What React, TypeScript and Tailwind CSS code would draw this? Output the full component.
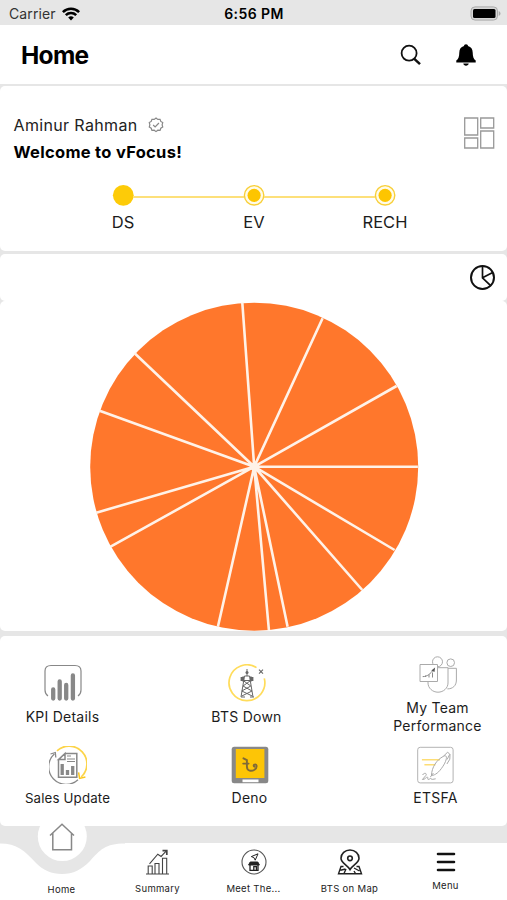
import type { ReactNode } from "react";

const spokes: [number, number][] = [
  [152.7, 2.7], [233, 18.3], [307, 86], [328.3, 166.7], [305, 250], [272.7, 290], [198, 326.7],
  [179.3, 330], [128.3, 326.7], [21, 246.7], [6.7, 212.7], [10, 110.7], [45, 53.3],
];

function Tile({ label, className, children }: { label: ReactNode; className: string; children: ReactNode }) {
  return (
    <div className={`flex shrink-0 flex-col items-center text-[14px] tracking-[0.25px] ${className}`}>
      {children}
      <div className="text-center leading-[17.5px] text-[#1c1c1c]">{label}</div>
    </div>
  );
}

function NavItem({ label, children, className }: { label: string; children: ReactNode; className: string }) {
  return (
    <div className={`flex w-24 flex-col items-center ${className}`}>
      {children}
      <span className="text-[9.5px] leading-3 tracking-[0.3px] whitespace-nowrap text-[#222]">{label}</span>
    </div>
  );
}

function Node({ label, solid }: { label: string; solid?: boolean }) {
  return (
    <div className="flex w-[60px] shrink-0 flex-col items-center">
      <svg width="22" height="22" viewBox="0 0 22 22">
        {solid ? (
          <circle cx="11.3" cy="11.3" r="10.4" fill="#fdcb08" />
        ) : (
          <>
            <circle cx="11.1" cy="11.3" r="9.7" fill="#fffbe8" stroke="#f8cf38" strokeWidth="1.4" />
            <circle cx="11.1" cy="11.3" r="6.6" fill="#fdc500" />
          </>
        )}
      </svg>
      <span className="mt-[6px] text-[16.5px] leading-5 text-[#1c1c1c]">{label}</span>
    </div>
  );
}

export default function App() {
  return (
    <div className="flex h-[900px] w-[507px] flex-col overflow-hidden bg-[#e6e6e6] font-[Inter,sans-serif] text-black">
      <div className="grid h-[25px] shrink-0 grid-cols-3 items-center pt-[2px] pr-[6px] pl-[9px]">
        <div className="flex items-center gap-[6px] text-[14px] leading-5 tracking-[0.1px] text-[#333]">
          <span>Carrier</span>
          <svg width="18" height="14" viewBox="0 0 18 14" fill="none" stroke="#000" strokeWidth="2.6">
            <path d="M.9 5.1A11.6 11.6 0 0 1 17.1 5.1M3.8 8.1A7.5 7.5 0 0 1 14.2 8.1" />
            <path d="M9 13.4 6.2 10.5A4 4 0 0 1 11.8 10.5Z" fill="#000" stroke="none" />
          </svg>
        </div>
        <div className="pr-[2px] text-center text-[14px] leading-5 font-semibold tracking-[0.4px] whitespace-nowrap">6:56 PM</div>
        <svg className="-mt-[2px] justify-self-end" width="31" height="16" viewBox="0 0 31 16">
          <rect x="1" y="1.9" width="26.5" height="13.2" rx="4" fill="#d6d6d6" stroke="#aaa" />
          <rect x="3" y="3.9" width="22.5" height="9.2" rx="1.5" />
          <path d="M28.7 6.1Q30.5 6.7 30.5 8.5T28.7 10.9Z" fill="#aaa" />
        </svg>
      </div>

      <header className="flex h-[59px] shrink-0 items-center bg-white pr-[30px] pl-[21px]">
        <h1 className="flex-1 text-[24.5px] leading-8 font-bold tracking-[-0.7px]">Home</h1>
        <svg width="22" height="22" viewBox="0 0 22 22" fill="none" stroke="#111" strokeWidth="1.8">
          <circle cx="9.1" cy="9.2" r="7.5" />
          <path d="m14.3 14.8 5.7 5.4" strokeWidth="2.5" />
        </svg>
        <svg className="ml-[33px]" width="22" height="24" viewBox="0 0 22 24">
          <path d="M11 1.2c1.3 0 1.9.8 2 1.8 3.2.8 4.6 3.3 4.7 6.5.1 4.3.8 6.5 3 8.1v1.8H1.3v-1.8c2.2-1.6 2.9-3.8 3-8.1.1-3.2 1.5-5.7 4.7-6.5.1-1 .7-1.8 2-1.8ZM8.3 20.5h5.4c-.2 1.4-1.2 2.2-2.7 2.2s-2.5-.8-2.7-2.2Z" />
        </svg>
      </header>

      <section className="mt-[1.5px] flex h-[165px] shrink-0 flex-col rounded-[5px] bg-white">
        <div className="flex h-[97px] shrink-0 items-start justify-between pt-[29.5px] pr-[12px] pl-[13.5px]">
          <div>
            <div className="flex items-center text-[16px] leading-5 tracking-[0.35px] text-[#222]">
              Aminur Rahman
              <svg className="ml-[10px]" width="16" height="16" viewBox="0 0 24 24" fill="none" stroke="#888" strokeWidth="1.8">
                <path d="m12 1.5 2.7 2.1 3.4-.2 1.1 3.2 2.9 1.8-.9 3.3.9 3.3-2.9 1.8-1.1 3.2-3.4-.2-2.7 2.1-2.7-2.1-3.4.2-1.1-3.2-2.9-1.8.9-3.3-.9-3.3 2.9-1.8 1.1-3.2 3.4.2Z" />
                <path d="m7.7 12 3 3 5.7-6" />
              </svg>
            </div>
            <div className="mt-[7px] text-[16.5px] leading-5 font-bold tracking-[0.3px]">Welcome to vFocus!</div>
          </div>
          <svg className="mt-[2px]" width="32" height="32" viewBox="0 0 32 32" fill="none" stroke="#999" strokeWidth="1.3">
            <path d="M1.7 1h13v17h-13zM17.7 1h13v10h-13zM1.7 21h13v10h-13zM17.7 14h13v17h-13z" />
          </svg>
        </div>
        <div className="flex pt-[1px] pl-[93px]">
          <Node label="DS" solid />
          <div className="-mx-[20px] mt-[12px] h-[2px] w-[111px] bg-[#fde07a]" />
          <Node label="EV" />
          <div className="-mx-[20px] mt-[12px] h-[2px] w-[111px] bg-[#fde07a]" />
          <Node label="RECH" />
        </div>
      </section>

      <section className="mt-[3.5px] flex h-[47px] shrink-0 justify-end rounded-[5px] bg-white pt-[10px] pr-[11px]">
        <svg width="27" height="27" viewBox="0 0 27 27" fill="none" stroke="#111" strokeWidth="2">
          <circle cx="13.5" cy="13.5" r="11.5" />
          <path d="M13.5 2v11.8l8.4 8M13.5 13.8l10.2-5.2" strokeWidth="1.7" />
        </svg>
      </section>
      <section className="flex h-[330px] shrink-0 justify-center rounded-[5px] bg-white">
        <svg width="331" height="330" viewBox="-1.6 1 331 330">
          <circle cx="164.6" cy="166.7" r="164" fill="#ff772c" />
          <path d={spokes.map(([x, y]) => `M164.6 166.7L${x} ${y}`).join("")} stroke="#fff2e8" strokeWidth="2.6" />
          <circle cx="164.6" cy="166.7" r="4" fill="#fff2e8" />
        </svg>
      </section>

      <section className="mt-[5px] flex h-[190px] shrink-0 flex-col rounded-[5px] bg-white">
        <div className="flex h-[110px] shrink-0">
          <Tile label="KPI Details" className="w-[125px] pt-[28px]">
            <svg className="mb-[6px]" width="38" height="38" viewBox="0 0 38 38" fill="none" stroke="#888">
              <path d="M4 32Q1 30 1 26V7Q1 1.5 7 1.5H31Q37 1.5 37 7V26Q37 30 34 32" strokeWidth="1.2" />
              <path d="M9.2 25.5V34.5M15.7 17.5V34.5M22.2 21V34.5M28.9 11.5V34.5" strokeWidth="4.3" strokeLinecap="round" />
            </svg>
          </Tile>
          <Tile label="BTS Down" className="ml-[61px] w-[121px] pt-[28px]">
            <svg className="mb-[6px]" width="38" height="38" viewBox="0 0 38 38" fill="none" stroke="#666">
              <path d="M28.5 3.6A17.9 17.9 0 1 0 36.3 14.4" stroke="#ffdc5b" strokeWidth="1.7" />
              <path d="m31 5.7 4 4m0-4-4 4" strokeWidth="1.1" />
              <path d="M19 5v7M16.5 12h5l3.5 21M16.5 12 13 33M15.8 17l7 5-9 5 10.4 5M22 17l-7 5 9 5-10.2 5M13 33h4m5 0h4M14.8 16.5h8.6" strokeWidth="1" />
              <path d="M13.5 13v4m1.7-4.5v5M24.5 13v4m-1.7-4.5v5" strokeWidth="1.8" />
              <circle cx="19" cy="8.5" r="1.5" fill="#666" stroke="none" />
            </svg>
          </Tile>
          <Tile label={<>My Team<br />Performance</>} className="ml-[70px] w-[121px] pt-[20px]">
            <svg className="mb-[6px]" width="38" height="37" viewBox="0 0 38 37" fill="none" stroke="#aaa" strokeWidth="1">
              <circle cx="18.5" cy="5.8" r="5" />
              <circle cx="31.7" cy="6.7" r="3.8" />
              <path d="M19 11.7h10V27c0 5-4.5 9.2-10 9.2S9 32 9 27V25.5M29 12.3h8.4V24c0 5.8-3.8 8.9-9 8.9" />
              <path d="M1 8.5h17.5V25.5H1z" fill="#fff" />
              <path d="M3.7 20.6c4.4.2 8-3 11-7.2M6.5 21v-1.5m3.5 2v-3m3.5 3v-5" stroke="#888" />
              <path d="m12.3 14.5 3.8-2.9-.6 4.3Z" fill="#555" stroke="none" />
            </svg>
          </Tile>
        </div>
        <div className="flex">
          <Tile label={<span className="text-[13.3px] tracking-[0.15px]">Sales Update</span>} className="w-[135px]">
            <svg className="mb-[5px]" width="38" height="38" viewBox="0 0 38 38" fill="none" stroke="#888">
              <path d="M8 4.8A17.6 17.6 0 0 1 32.2 31" stroke="#fcd449" strokeWidth="1.7" />
              <path d="M29.6 26.3 30.6 32.4 36.4 31" stroke="#fcc71b" strokeWidth="1.5" />
              <path d="M29 33.7A17.3 17.3 0 0 1 5.3 8M1.5 8l4.8-1.5.5 5" strokeWidth="1.3" />
              <path d="M16 7.4h11.8v23.8H9.5V13.6ZM16 7.4v6.2H9.5Z" strokeWidth="1.5" />
              <path d="M13.2 29V18M18.5 29v-5M23.7 29v-9" strokeWidth="3.3" />
              <path d="M18 10h4m-4 3h8m-8 2.5h8" strokeWidth="1.2" />
            </svg>
          </Tile>
          <Tile label="Deno" className="ml-[54px] w-[121px]">
            <svg className="mb-[5px]" width="38" height="38" viewBox="0 0 38 38">
              <rect x=".7" y=".7" width="36.6" height="36.6" rx="2.5" fill="#888" />
              <path d="M4.8 3h28.6v29H4.8z" fill="#fdc506" />
              <path d="M11.5 33.5h16v2.7h-16z" fill="#fff" />
              <path d="m12.5 12.3 3.4 1.8v6.4c0 4.8 4.7 5 7.6 3.2 3-2 2.6-5.4.4-5.2-1.5.1-1.5 1.7-.5 2.2M12.2 17.6h5.4" fill="none" stroke="#806a37" strokeWidth="1.9" strokeLinecap="round" />
            </svg>
          </Tile>
          <Tile label="ETSFA" className="ml-[65px] w-[121px]">
            <svg className="mb-[5px]" width="38" height="38" viewBox="0.6 0 38 38" fill="none" stroke="#aaa" strokeWidth="1">
              <rect x="1.3" y="1.3" width="35.4" height="35.6" rx="2.5" stroke="#b3b3b3" />
              <path d="M5.5 13.7h18M8 18.7h11" stroke="#fddd75" strokeWidth="1.4" />
              <path d="M15 29.5c.5-8.5 5-15.4 12-19.2 4.5-2.4 3.8 3.7-.8 10.5-3.5 5.3-7.2 8.5-11.2 8.7ZM14 31l3-4M27 10.3l4.3-4.2 2 2.2-2.6 5.2M30.5 18l2.9-4.8.2-5M6.2 29c1-2.4 4.7-2.1 3.4.3L6 33.5c2.5.3 4-2.7 5-2.5s-.8 2.7 1.5 2.4c1.4-.2 1.4-1.7 2-1.2s0 1.4 1.4 1.2l3.4-.6" />
            </svg>
          </Tile>
        </div>
      </section>

      <nav className="relative mt-[17px] flex h-[57px] shrink-0 bg-white px-[13.5px]">
        <svg className="absolute -top-[32px] left-0" width="130" height="63" viewBox="0 0 130 63" fill="none">
          <path d="M0 32.5C17 32.5 25 40 36 52C44 59.5 51 63 62 63S82 58.5 90 50C100 39 105 32.5 125 32.5V26H0Z" fill="#e6e6e6" />
          <circle cx="62.3" cy="25.5" r="24.5" fill="#fff" />
          <path d="m50 24.5 12-11.2L74 24.5M52.8 22v16.7h18.7V22" stroke="#888" strokeWidth="1.5" />
        </svg>
        <NavItem label="Home" className="pt-[41px]"><></></NavItem>
        <NavItem label="Summary" className="pt-[6px]">
          <svg className="mb-[7.5px]" width="26" height="26" viewBox="0 0 26 26" fill="none" stroke="#444" strokeWidth="1.1">
            <path d="M1 25h23M3.2 25v-8h4v8M10 25V14.5h4V25M17.5 25V9.2h4.2V25M4.5 14.8l8.3-9.6 3.3 2.3 5.5-5.8" />
            <path d="M17.5 1.7h4.3V6" strokeWidth="1.7" />
          </svg>
        </NavItem>
        <NavItem label="Meet The..." className="pt-[6px]">
          <svg className="mb-[7.5px]" width="26" height="26" viewBox="0 0 26 26" fill="none" stroke="#222">
            <circle cx="13" cy="13" r="12" stroke="#555" strokeWidth="1.1" />
            <path d="m10.3 7.6 6.7-2.8-2.8 6.4-1.3-2.6Z" strokeWidth="1" />
            <path d="M9.2 13h7.6l1.6 3H7.6Z" fill="#222" strokeWidth="1" />
            <path d="M9 16v5.3h8V16M12.8 21v-3.3h2.6V21" strokeWidth="1.3" />
          </svg>
        </NavItem>
        <NavItem label="BTS on Map" className="pt-[6px]">
          <svg className="mb-[7.5px]" width="26" height="26" viewBox="0 0 26 26" fill="none" stroke="#222" strokeWidth="1.6">
            <path d="M13 20.5C10.5 16 4 14 4 9.2a9 8.2 0 0 1 18 0c0 4.8-6.5 6.8-9 11.3Z" />
            <circle cx="13" cy="9.3" r="2.3" />
            <path d="M6.5 17.5H4L1.5 24.7h23L22 17.5h-2.5M3.5 21.3l5-1.3M7 24.5l2-4.5m8-1 5.5 3m-5.5 0 1.5 2.5" strokeWidth="1.4" />
          </svg>
        </NavItem>
        <NavItem label="Menu" className="pt-[6px]">
          <svg className="mb-[4.5px]" width="26" height="26" viewBox="0 0 26 26" stroke="#111" strokeWidth="2.6" strokeLinecap="round">
            <path d="M5 5h16M5 13h16M5 21h16" />
          </svg>
        </NavItem>
      </nav>
    </div>
  );
}
